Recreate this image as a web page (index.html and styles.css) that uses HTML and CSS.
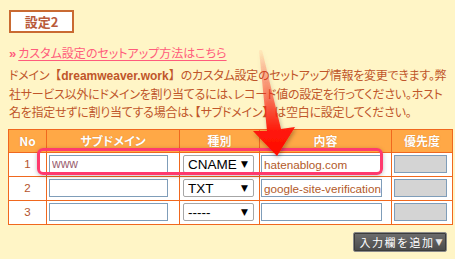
FILE: index.html
```html
<!DOCTYPE html>
<html lang="ja">
<head>
<meta charset="utf-8">
<link rel="stylesheet" href="styles.css">
</head>
<body>
<div class="page">
  <div class="title">設定2</div>
  <div class="linkline"><span class="raquo">»</span><a class="link" href="#">カスタム設定のセットアップ方法はこちら</a></div>
  <p class="desc">ドメイン<span class="br">【</span><b class="dom">dreamweaver.work</b><span class="br">】</span>のカスタム設定のセットアップ情報を変更できます。弊社サービス以外にドメインを割り当てるには、レコード値の設定を行ってください。ホスト名を指定せずに割り当てする場合は、<span class="br">【</span>サブドメイン<span class="br">】</span>は空白に設定してください。</p>
  <table class="grid">
    <thead>
      <tr>
        <th class="c-no">No</th>
        <th class="c-sub">サブドメイン</th>
        <th class="c-type">種別</th>
        <th class="c-val">内容</th>
        <th class="c-pri">優先度</th>
      </tr>
    </thead>
    <tbody>
      <tr>
        <td class="num">1</td>
        <td class="c-sub"><input class="in sub" value="www"></td>
        <td class="c-type"><span class="sel"><select><option>CNAME</option></select></span></td>
        <td class="c-val"><input class="in val" value="hatenablog.com"></td>
        <td class="c-pri"><input class="in pri" value=""></td>
      </tr>
      <tr>
        <td class="num">2</td>
        <td class="c-sub"><input class="in sub" value=""></td>
        <td class="c-type"><span class="sel"><select><option>TXT</option></select></span></td>
        <td class="c-val"><input class="in val" value="google-site-verification"></td>
        <td class="c-pri"><input class="in pri" value=""></td>
      </tr>
      <tr>
        <td class="num">3</td>
        <td class="c-sub"><input class="in sub" value=""></td>
        <td class="c-type"><span class="sel"><select><option>-----</option></select></span></td>
        <td class="c-val"><input class="in val" value=""></td>
        <td class="c-pri"><input class="in pri" value=""></td>
      </tr>
    </tbody>
  </table>
  <div class="actions"><button class="addbtn">入力欄を追加<span class="tri">▼</span></button></div>

  <div class="highlight"></div>
  <svg class="arrow" width="60" height="120" viewBox="0 0 60 120">
    <defs>
      <linearGradient id="ag" x1="0" y1="0" x2="0" y2="1">
        <stop offset="0" stop-color="#ff3020" stop-opacity="0.05"/>
        <stop offset="0.45" stop-color="#ff2a1a" stop-opacity="0.55"/>
        <stop offset="0.75" stop-color="#ff1a0a" stop-opacity="1"/>
        <stop offset="1" stop-color="#ff0800" stop-opacity="1"/>
      </linearGradient>
      <filter id="sh" x="-30%" y="-10%" width="160%" height="130%">
        <feDropShadow dx="1" dy="2" stdDeviation="2" flood-color="#000" flood-opacity="0.3"/>
      </filter>
    </defs>
    <polygon points="9,2 12,2 31,81 45,79 27,108 3,83 17,83" fill="url(#ag)" filter="url(#sh)"/>
  </svg>
</div>
</body>
</html>
```

FILE: styles.css
```css
html, body {
  margin: 0;
  padding: 0;
  background: #fff5c6;
}
.page {
  position: relative;
  width: 455px;
  height: 259px;
  padding: 10px 8px 0 8px;
  box-sizing: border-box;
  font-family: "Noto Sans CJK JP", "Liberation Sans", sans-serif;
  font-size: 12px;
  font-feature-settings: "palt";
  color: #c0562a;
}
.title {
  display: inline-block;
  margin-left: 1px;
  width: 65px;
  height: 23px;
  box-sizing: border-box;
  border: 2px solid #c96a32;
  background: #ffffff;
  color: #b95a3a;
  font-weight: bold;
  font-size: 13px;
  line-height: 19px;
  text-align: center;
}
.linkline {
  margin-top: 12px;
  margin-left: 1px;
  height: 15px;
  line-height: 15px;
  color: #ff5c7c;
}
.raquo {
  font-family: "Liberation Sans", sans-serif;
  font-weight: bold;
  font-size: 13px;
  margin-right: 2px;
}
.link {
  color: #ff5c7c;
  text-decoration: underline;
  text-underline-offset: 2px;
}
.desc {
  margin: 6px 0 0 1px;
  width: 440px;
  line-height: 17.3px;
  letter-spacing: -0.25px;
}
.br {
  font-feature-settings: normal;
  letter-spacing: 0;
}
.dom {
  font-family: "Liberation Sans", sans-serif;
  font-weight: bold;
  letter-spacing: 0;
}
.grid {
  margin-top: 9px;
  border-collapse: collapse;
  width: 439px;
  table-layout: fixed;
  background: #ffffff;
}
.grid th, .grid td {
  border: 1px solid #f0681e;
  padding: 0;
}
.grid th {
  background: #ffa846;
  color: #ffffff;
  font-weight: bold;
  height: 22px;
  font-size: 12px;
  text-shadow: 0 0 1px rgba(180, 90, 20, 0.6);
}
.grid td {
  height: 23px;
}
.c-no { width: 37px; }
.c-sub { width: 132px; }
.c-type { width: 79px; }
.c-val { width: 131px; }
.c-pri { width: 60px; }
.num {
  text-align: center;
  font-family: "Liberation Sans", sans-serif;
  font-size: 11.5px;
  color: #b4532e;
}
.in {
  display: block;
  box-sizing: border-box;
  height: 18px;
  border: 1px solid #7f9db9;
  background: #ffffff;
  padding: 0 2px;
  font-family: "Liberation Sans", sans-serif;
  font-size: 12px;
  outline: none;
}
.sub {
  width: 119px;
  margin-left: 2px;
  color: #9a6070;
}
.val {
  width: 121px;
  margin-left: 1px;
  padding: 0 0 0 2px;
  color: #b25a2a;
  font-size: 11.7px;
}
.pri {
  width: 53px;
  margin-left: 2px;
  background: #d4d4d4;
}
.sel {
  position: relative;
  display: block;
  width: 71px;
  margin-left: 3px;
}
.sel select {
  -webkit-appearance: none;
  appearance: none;
  display: block;
  width: 71px;
  height: 18px;
  box-sizing: border-box;
  border: 1px solid #a6a6a6;
  border-radius: 2px;
  background: #ffffff;
  padding: 0 0 0 4px;
  font-family: "Liberation Sans", sans-serif;
  font-size: 13.5px;
  color: #000000;
}
.sel::after {
  content: "▼";
  position: absolute;
  right: 6px;
  top: 3px;
  font-size: 9px;
  line-height: 12px;
  color: #000000;
  font-family: "DejaVu Sans", sans-serif;
  pointer-events: none;
}
.actions {
  display: flex;
  justify-content: flex-end;
  width: 439px;
  margin-top: 7px;
}
.addbtn {
  display: flex;
  align-items: center;
  justify-content: center;
  width: 94px;
  height: 20px;
  padding: 0 0 0 2px;
  border: 1px solid #8a8a8a;
  border-radius: 2px;
  background: linear-gradient(#6e6e6e, #4a4a4a);
  color: #ffffff;
  font-family: "Noto Sans CJK JP", sans-serif;
  font-size: 11px;
  letter-spacing: 1.5px;
  box-shadow: inset 0 0 0 1px #3c3c3c;
}
.tri {
  margin-left: 1px;
  font-size: 9px;
  color: #e8e8e8;
  letter-spacing: 0;
  font-family: "DejaVu Sans", sans-serif;
}
.highlight {
  position: absolute;
  left: 37px;
  top: 148px;
  width: 346px;
  height: 27px;
  box-sizing: border-box;
  border: 3px solid #ff3a6e;
  border-radius: 6px;
  box-shadow: 0 1px 4px rgba(0, 0, 0, 0.25);
  pointer-events: none;
}
.arrow {
  position: absolute;
  left: 250px;
  top: 48px;
  pointer-events: none;
}
```
